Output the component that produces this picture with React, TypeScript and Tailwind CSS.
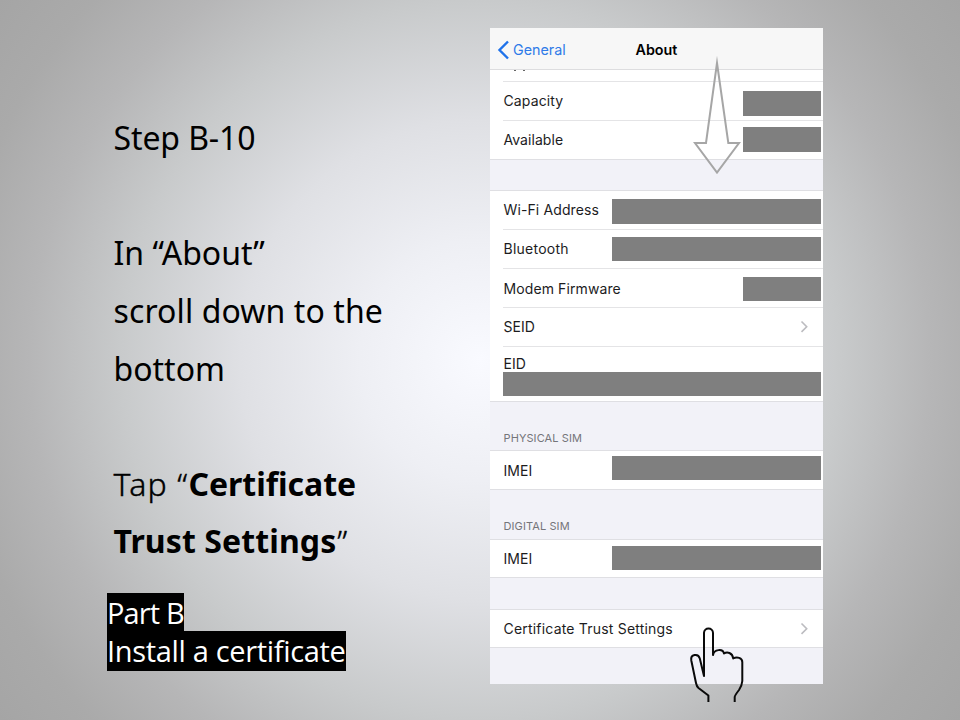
import React from "react";

type RowProps = {
  label: string;
  bar?: string;
  chevron?: boolean;
  height?: string;
  last?: boolean;
  track?: string;
  top?: string;
};

function Chevron({ top }: { top: string }) {
  return (
    <svg className={`mr-[13px] h-4 w-3 shrink-0 ${top}`} viewBox="0 0 12 16" fill="none" stroke="#bcbcc0" strokeWidth="1.6">
      <path d="M3.5 4.5 L8.7 9.7 L3.5 14.9" />
    </svg>
  );
}

function Row({ label, bar, chevron, last, height = "h-[39px]", track = "tracking-[0.05px]", top = "mt-[10px]" }: RowProps) {
  return (
    <div className={`pl-[13px] ${height}`}>
      <div className={`flex h-full items-start justify-between ${last ? "" : "border-b border-[#e4e4e6]"}`}>
        <span className={`whitespace-nowrap pl-[0.5px] text-[14px] leading-5 ${top} ${track}`}>{label}</span>
        {bar && <div className={`mr-[2px] shrink-0 bg-[#7f7f7f] ${bar}`} />}
        {chevron && <Chevron top={top} />}
      </div>
    </div>
  );
}

const group = "border-y border-[#dfdfe3] bg-white";
const heading = "pl-[13.5px] text-[11px] leading-4 tracking-[0.1px] text-[#75757a]";
const demiLight = "font-light [-webkit-text-stroke:0.4px_black]";

export default function App() {
  return (
    <div className="relative flex h-[720px] w-[960px] overflow-hidden bg-[radial-gradient(circle_600px_at_480px_360px,#f9faff_0%,#eeeff4_20%,#dfe0e4_40%,#c8cacb_60%,#b6b6b7_75%,#aaaaaa_88%,#a5a5a5_100%)] font-['Noto_Sans',sans-serif] text-black">
      <div className="flex w-[490px] shrink-0 flex-col">
        <div className="ml-[113.5px] mt-[109px] h-[484px] whitespace-nowrap text-[32px] leading-[57.7px]">
          <p className="tracking-[-0.1px]">Step B-10</p>
          <p>&nbsp;</p>
          <p>In “About”</p>
          <p className="tracking-[0.1px]">scroll down to the</p>
          <p>bottom</p>
          <p>&nbsp;</p>
          <p><span className={`tracking-[1.2px] ${demiLight}`}>Tap “</span><b className="tracking-[-0.05px]">Certificate</b></p>
          <p className="-mt-px"><b className="tracking-[0.1px]">Trust Settings</b><span className={`pl-px ${demiLight}`}>”</span></p>
        </div>
        <div className="ml-[107px] flex flex-col items-start whitespace-nowrap font-['Open_Sans',sans-serif] text-[29px] text-white">
          <span className="h-[38px] w-[77px] bg-black leading-[40px] tracking-[-0.85px]">Part B</span>
          <span className="h-[40px] w-[239px] bg-black leading-[40px] tracking-[-0.33px]">Install a certificate</span>
        </div>
      </div>

      <div className="mt-7 flex h-[656px] w-[333px] shrink-0 flex-col bg-[#f2f2f8] font-['Inter',sans-serif] text-[#1c1c1e]">
        <div className="flex h-[42px] shrink-0 items-center border-b border-[#dddddf] bg-[#f7f7f7] pt-[2px] text-[14.3px]">
          <div className="flex w-[145.5px] items-center pl-[7px] text-[#2f7be8]">
            <svg className="mr-[3px] h-[22px] w-[13px]" viewBox="0 0 13 22" fill="none" stroke="#1f72ea" strokeWidth="2.4">
              <path d="M11 2.5 L2.5 11 L11 19.5" />
            </svg>
            <span>General</span>
          </div>
          <span className="font-semibold text-black">About</span>
        </div>
        <div className="h-[12px] shrink-0 bg-white pl-[13px]">
          <div className="flex h-full gap-[7px] border-b border-[#e4e4e6] pl-[11px]">
            <i className="h-px w-[2px] bg-[#666]" />
            <i className="h-px w-[2px] bg-[#666]" />
          </div>
        </div>
        <div className="shrink-0 border-b border-[#dfdfe3] bg-white">
          <Row label="Capacity" bar="mt-[9px] h-[25px] w-[78px]" top="mt-[9px]" track="tracking-[0.12px]" />
          <Row label="Available" bar="mt-[6px] h-[25px] w-[78px]" top="mt-[9px]" height="h-[38px]" last />
        </div>
        <div className={`mt-[30px] shrink-0 ${group}`}>
          <Row label="Wi-Fi Address" bar="mt-[8px] h-[25px] w-[209px]" top="mt-[9px]" track="tracking-[0.12px]" />
          <Row label="Bluetooth" bar="mt-[7px] h-[24px] w-[209px]" top="mt-[9px]" track="tracking-[0.25px]" />
          <Row label="Modem Firmware" bar="mt-[8px] h-[24px] w-[78px]" track="tracking-[0.1px]" />
          <Row label="SEID" top="mt-[9px]" chevron />
          <div className="h-[54px] pl-[13px]">
            <div className="h-[25px] pl-[0.5px] pt-[7px] text-[14px] leading-5">EID</div>
            <div className="mr-[2px] h-[24px] bg-[#7f7f7f]" />
          </div>
        </div>
        <div className={`mt-[28px] ${heading}`}>PHYSICAL SIM</div>
        <div className={`mt-[4px] shrink-0 ${group}`}>
          <Row label="IMEI" bar="mt-[5px] h-[24px] w-[209px]" height="h-[38px]" last />
        </div>
        <div className={`mt-[28px] ${heading}`}>DIGITAL SIM</div>
        <div className={`mt-[5px] shrink-0 ${group}`}>
          <Row label="IMEI" bar="mt-[6px] h-[24px] w-[209px]" top="mt-[9px]" height="h-[37px]" last />
        </div>
        <div className={`mt-[31px] shrink-0 ${group}`}>
          <Row label="Certificate Trust Settings" height="h-[37px]" top="mt-[9px]" track="tracking-[0.2px]" chevron last />
        </div>
      </div>

      <svg className="absolute left-[690px] top-[50px] h-[130px] w-[54px]" viewBox="690 50 54 130" fill="none" stroke="#a6a6a6" strokeWidth="2">
        <path d="M717 63 L728.3 143 H739 L717 172.5 L695 143 H706 Z" strokeMiterlimit="20" />
      </svg>
      <svg className="absolute left-[685px] top-[622px] h-[82px] w-[64px]" viewBox="685 622 64 82" fill="none" stroke="#0a0a0a" strokeWidth="2" strokeLinejoin="round">
        <path d="M708.4 702 V695.5 L698.5 688 Q696.7 686.5 696 683 L691.3 660.5 C690.2 654 698.3 653 699.8 658.5 L704 676 V633 C704 627 713 627 713 633 V655 C714 649 723 648.5 724 653.5 C727 651.5 732.5 652.5 733.2 658.5 C737 656.2 742.3 658 742.3 662 V681 Q742 685.5 739 690 Q734.7 695.5 734.7 697 V702" />
      </svg>
    </div>
  );
}
